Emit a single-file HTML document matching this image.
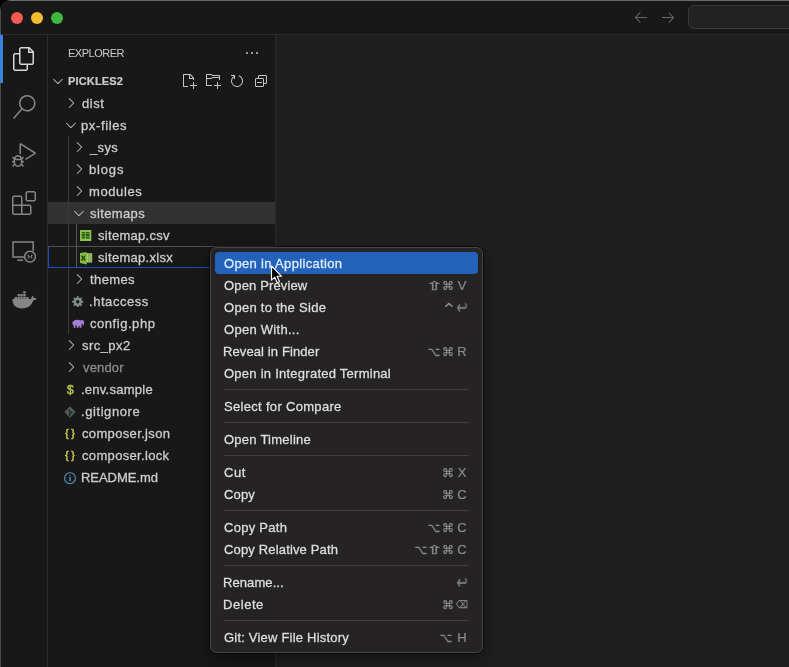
<!DOCTYPE html>
<html lang="en">
<head>
<meta charset="utf-8">
<title>Explorer context menu</title>
<style>
*{box-sizing:border-box;margin:0;padding:0}
html,body{width:789px;height:667px;overflow:hidden;background:#000}
body{font-family:"Liberation Sans","DejaVu Sans",sans-serif;font-size:13px;color:#ccc;position:relative}
#win{position:absolute;left:0;top:0;width:800px;height:680px;background:#181818;border-top-left-radius:10px;overflow:hidden}
#in{position:absolute;left:1px;top:1px;width:800px;height:680px;background:#1f1f1f}
#frame{position:absolute;left:0;top:0;width:900px;height:900px;border-left:1px solid #484848;border-top:1px solid #6a6a6a;border-top-left-radius:10px}
#title{position:absolute;left:0;top:0;width:100%;height:34px;background:#181818;border-bottom:1px solid #2b2b2b;z-index:3}
.tl{position:absolute;top:10.600px;width:12.400px;height:12.400px;border-radius:50%}
#act{position:absolute;left:0;top:33px;width:47px;height:700px;background:#181818;border-right:1px solid #2b2b2b}
.ind{position:absolute;left:0;top:34px;width:2.500px;height:49px;background:#3a82dc}
#act svg{position:absolute}
#side{position:absolute;left:47px;top:33px;width:228px;height:700px;background:#181818;border-right:1px solid #2b2b2b}
.abs{position:absolute}
.lbl,.l,.g,.t{will-change:transform}
.row{position:absolute;left:0;width:227px;height:22px;line-height:22px;white-space:nowrap;color:#ccc}
.row span{position:absolute;top:0}
.row .lbl{top:1px;letter-spacing:.3px;-webkit-text-stroke:.3px currentColor}
.row svg{position:absolute}
.guide{position:absolute;width:1px;background:#3a3a3a}
#menu{position:absolute;left:210px;top:247px;width:273px;height:406px;background:#252324;border-radius:6.5px;box-shadow:0 0 0 1px rgba(0,0,0,.55),inset 0 0 0 1px #474546,0 6px 18px 1px rgba(0,0,0,.4)}
.mi{position:absolute;left:5px;width:263px;height:22px;line-height:22px;border-radius:4px;color:#dedede;white-space:nowrap}
.mi .l{position:absolute;left:9px;top:1px;letter-spacing:.3px;-webkit-text-stroke:.3px currentColor}
.mi .g{position:absolute;top:0;width:20px;text-align:center;color:#8c8c8c;-webkit-text-stroke:.25px currentColor;font-family:"DejaVu Sans","Liberation Sans",sans-serif;font-size:13px;line-height:22px}
.mi .ky{font-family:"Liberation Sans",sans-serif;font-size:13px;top:1px;-webkit-text-stroke:.2px currentColor}
.mi .sh{transform:scaleX(1.850);font-size:12px;top:1px;margin-left:1px}
.mi .cm{font-size:12px;top:1px}
.mi .op{font-size:12.500px;top:1px;transform:scaleX(.88)}
.mi .ct{font-size:18px;top:3px;margin-left:1.500px;-webkit-text-stroke:0;transform:scaleX(1.080)}
.mi .rt{font-size:14.500px;top:0px;transform:scale(.92,1.300);-webkit-text-stroke:0}
.mi .bs{font-size:10.500px;top:0px;transform:scaleX(.8);margin-left:-.5px}
.mi.sel{background:#2362ba;color:#dcecff}
.sep{position:absolute;left:14px;width:245px;height:1px;background:#3f3d3e}
</style>
</head>
<body>
<div id="win"><div id="in">
  <div id="title">
    <div class="tl" style="left:9.800px;background:#f05b53"></div>
    <div class="tl" style="left:29.800px;background:#f4bd30"></div>
    <div class="tl" style="left:49.700px;background:#3eb93f"></div>
    <svg class="abs" style="left:632px;top:8px" width="16" height="16" viewBox="0 0 16 16" fill="#666"><path d="M7 3.093l-5 5V8.8l5 5 .707-.707-4.146-4.147H14v-1H3.56L7.708 3.8 7 3.093z"/></svg>
    <svg class="abs" style="left:659px;top:8px" width="16" height="16" viewBox="0 0 16 16" fill="#666"><path d="M9 13.887l5-5V8.18l-5-5-.707.707 4.146 4.147H2v1h10.44L8.292 13.18l.707.707z"/></svg>
    <div class="abs" style="left:687px;top:4px;width:140px;height:24px;border:1px solid #3a3a3a;border-radius:6px;background:#222"></div>
  </div>
  <div id="act">
    <svg style="left:11px;top:13px" width="24" height="24" viewBox="0 0 24 24" fill="#d7d7d7"><path d="M17.5 0h-9L7 1.500V6H2.500L1 7.500v15.070L2.500 24h12.070L16 22.570V18h4.700l1.300-1.430V4.500L17.500 0zm0 2.120l2.380 2.380H17.500V2.120zm-3 20.380h-12v-15H7v9.070L8.500 18h6v4.500zm6-6h-12v-15H16V6h4.500v10.500z"/></svg>
    <svg style="left:11px;top:61px" width="24" height="24" viewBox="0 0 24 24" fill="#868686"><path d="M15.250 0a8.250 8.250 0 0 0-6.180 13.720L1 22.880l1.120 1 8.050-9.120A8.251 8.251 0 1 0 15.250.010V0zm0 15a6.750 6.750 0 1 1 0-13.500 6.750 6.750 0 0 1 0 13.500z"/></svg>
    <svg style="left:11px;top:109px" width="24" height="24" viewBox="0 0 24 24" fill="#868686"><path d="M10.940 13.500l-1.320 1.320a3.730 3.730 0 0 0-7.240 0L1.060 13.500 0 14.560l1.720 1.720-.22.220V18H0v1.500h1.500v.080c.077.489.214.966.410 1.420L0 22.940 1.060 24l1.650-1.650A4.308 4.308 0 0 0 6 24a4.310 4.310 0 0 0 3.290-1.650L10.940 24 12 22.940 10.090 21c.198-.464.336-.951.410-1.450v-.1H12V18h-1.500v-1.500l-.22-.22L12 14.560l-1.060-1.060zM6 13.500a2.250 2.250 0 0 1 2.250 2.250h-4.500A2.250 2.250 0 0 1 6 13.500zm3 6a3.330 3.330 0 0 1-3 3 3.330 3.330 0 0 1-3-3v-2.250h6v2.250zm14.760-9.900v1.260L13.500 17.370V15.600l8.500-5.370L9 2v9.460a5.070 5.070 0 0 0-1.500-.72V.630L8.640 0l15.120 9.600z"/></svg>
    <svg style="left:11px;top:157px" width="24" height="24" viewBox="0 0 24 24" fill="#868686"><path d="M13.500 1.500L15 0h7.500L24 1.500V9l-1.500 1.500H15L13.500 9V1.500zm1.500 0V9h7.500V1.500H15zM0 15V6l1.500-1.500H9L10.500 6v7.500H18l1.500 1.500v7.500L18 24H1.500L0 22.500V15zm9-1.500V6H1.500v7.500H9zM9 15H1.500v7.500H9V15zm1.500 7.500H18V15h-7.500v7.500z"/></svg>
    <svg style="left:11px;top:205px" width="24" height="24" viewBox="0 0 24 24" fill="none" stroke="#868686" stroke-width="1.500"><path d="M12.500 18H1V3h20.200v9"/><path d="M5.200 21.200h5.800"/><circle cx="18" cy="17.700" r="5.400"/><path d="M15.700 15.900l1.500 1.800-1.500 1.800M20.300 15.900l-1.500 1.800 1.500 1.800" stroke-width="1.100"/></svg>
    <svg style="left:10.500px;top:256.500px" width="25" height="18.500" viewBox="0 0 26 19" fill="#868686"><path d="M0.400 8.200h19.300c.3-1.500 1-2.600 2-3.300.6.700.9 1.500.8 2.500 1.200-.4 2.300-.3 3.100.2-.6 1.200-1.800 1.900-3.500 1.900C20.500 14.800 16.500 18 10.500 18 4 18 0.400 14.500 0.400 8.200z"/><path d="M2.700 5.100h2.500v2.500H2.700zM5.700 5.100h2.500v2.500H5.700zM8.700 5.100h2.500v2.500H8.700zM11.700 5.100h2.500v2.500h-2.500zM14.700 5.100h2.500v2.500h-2.500zM5.700 2.100h2.500v2.500H5.700zM8.700 2.100h2.500v2.500H8.700zM11.700 2.100h2.500v2.500h-2.500zM11.700 -0.900h2.500v2.500h-2.500z" transform="translate(0,1)"/></svg>
  </div>
  <div id="side">
    <span class="abs t" style="left:20px;top:9px;line-height:20px;font-size:11px;color:#ccc;letter-spacing:-.5px">EXPLORER</span>
    <svg class="abs" style="left:196px;top:11px" width="16" height="16" viewBox="0 0 16 16" fill="#c5c5c5"><path d="M4 8a1 1 0 1 1-2 0 1 1 0 0 1 2 0zm5 0a1 1 0 1 1-2 0 1 1 0 0 1 2 0zm5 0a1 1 0 1 1-2 0 1 1 0 0 1 2 0z"/></svg>
    <div class="row" style="top:36px"><svg style="left:2px;top:3px" width="16" height="16" viewBox="0 0 16 16" fill="#c5c5c5"><path d="M7.976 10.072l4.357-4.357.62.618L8.284 11h-.618L3 6.333l.619-.618 4.357 4.357z"/></svg><span class="t" style="left:20px;top:-.5px;font-size:11px;font-weight:bold;letter-spacing:.15px;-webkit-text-stroke:.2px currentColor">PICKLES2</span><svg style="left:133px;top:3px" width="16" height="16" viewBox="0 0 16 16" fill="#c5c5c5"><path d="M9.500 1.100l3.400 3.500.1.400v2h-1V6H8V2H3v11h4v1H2.500l-.5-.5v-12l.5-.5h6.700l.3.100zM9 2v3h2.900L9 2zm4 14h-1v-3H9v-1h3V9h1v3h3v1h-3v3z"/></svg><svg style="left:157px;top:3px" width="16" height="16" viewBox="0 0 16 16" fill="#c5c5c5"><path d="M14.500 2H7.710l-.85-.85L6.510 1h-5l-.5.500v11l.5.500H7v-1H1.990V6h4.490l.35-.15.860-.86H14v1.500l-.001.510h1.011V2.500L14.500 2zm-.51 2h-6.500l-.35.150-.86.860H2v-3h4.290l.85.850.36.150H14l-.1.990zM13 16h-1v-3H9v-1h3V9h1v3h3v1h-3v3z"/></svg><svg style="left:181px;top:3px" width="16" height="16" viewBox="0 0 16 16" fill="#c5c5c5"><path d="M4.681 3H2V2h3.500l.5.500V6H5V4a5 5 0 1 0 4.530-.761l.302-.953A6 6 0 1 1 4.681 3z"/></svg><svg style="left:205px;top:3px" width="16" height="16" viewBox="0 0 16 16" fill="#c5c5c5"><path d="M9 9H4v1h5V9z"/><path d="M5 3l1-1h7l1 1v7l-1 1h-2v2l-1 1H3l-1-1V6l1-1h2V3zm1 2h4l1 1v4h2V3H6v2zm4 1H3v7h7V6z"/></svg></div>
    <div class="row" style="top:58px"><svg style="left:15px;top:3px" width="16" height="16" viewBox="0 0 16 16" fill="#c5c5c5"><path d="M10.072 8.024L5.715 3.667l.618-.62L11 7.716v.618L6.333 13l-.618-.619 4.357-4.357z"/></svg><span class="lbl" style="left:34px;letter-spacing:0.538px">dist</span></div>
    <div class="row" style="top:80px"><svg style="left:15px;top:3px" width="16" height="16" viewBox="0 0 16 16" fill="#c5c5c5"><path d="M7.976 10.072l4.357-4.357.62.618L8.284 11h-.618L3 6.333l.619-.618 4.357 4.357z"/></svg><span class="lbl" style="left:33px;letter-spacing:0.62px">px-files</span></div>
    <div class="row" style="top:102px"><svg style="left:23px;top:3px" width="16" height="16" viewBox="0 0 16 16" fill="#c5c5c5"><path d="M10.072 8.024L5.715 3.667l.618-.62L11 7.716v.618L6.333 13l-.618-.619 4.357-4.357z"/></svg><span class="lbl" style="left:42px;letter-spacing:0.363px">_sys</span></div>
    <div class="row" style="top:124px"><svg style="left:23px;top:3px" width="16" height="16" viewBox="0 0 16 16" fill="#c5c5c5"><path d="M10.072 8.024L5.715 3.667l.618-.62L11 7.716v.618L6.333 13l-.618-.619 4.357-4.357z"/></svg><span class="lbl" style="left:41px;letter-spacing:0.835px">blogs</span></div>
    <div class="row" style="top:146px"><svg style="left:23px;top:3px" width="16" height="16" viewBox="0 0 16 16" fill="#c5c5c5"><path d="M10.072 8.024L5.715 3.667l.618-.62L11 7.716v.618L6.333 13l-.618-.619 4.357-4.357z"/></svg><span class="lbl" style="left:41px;letter-spacing:0.597px">modules</span></div>
    <div class="row" style="top:168px;background:#323232"><svg style="left:23px;top:3px" width="16" height="16" viewBox="0 0 16 16" fill="#c5c5c5"><path d="M7.976 10.072l4.357-4.357.62.618L8.284 11h-.618L3 6.333l.619-.618 4.357 4.357z"/></svg><span class="lbl" style="left:42px;letter-spacing:0.386px">sitemaps</span></div>
    <div class="row" style="top:190px"><svg style="left:32px;top:6px" width="12" height="12" viewBox="0 0 12 12"><rect x="0" y="0" width="11.300" height="11.100" rx=".5" fill="#8cc152"/><path d="M1.700 2h3.600v1.400H1.700zM6 2h3.600v1.400H6zM1.700 4.100h3.600v1.800H1.700zM6 4.100h3.600v1.800H6zM1.700 6.600h3.600v1.800H1.700zM6 6.600h3.600v1.800H6z" fill="#2f5a17"/></svg><span class="lbl" style="left:50px;letter-spacing:0.296px">sitemap.csv</span></div>
    <div class="row" style="top:212px;box-shadow:inset 0 1px 0 #505050,inset 1px 0 0 #1d4fc0,inset 0 -1px 0 #1d4fc0,inset -1px 0 0 #1d4fc0"><svg style="left:32px;top:5px" width="13" height="14" viewBox="0 0 13 14"><rect x="6.200" y="2.200" width="6" height="9.300" rx=".4" fill="#a9d277"/><path d="M8.900 2.600v8.500M10.900 2.600v8.500" stroke="#5f8f30" stroke-width=".8"/><path d="M0 2.100L6.700 1v12.400L0 12.100z" fill="#83bd45"/><path d="M1.500 4.700l3.700 4.800M5.200 4.700L1.500 9.500" stroke="#1f3d0c" stroke-width="1.300"/></svg><span class="lbl" style="left:50px;letter-spacing:0.297px">sitemap.xlsx</span></div>
    <div class="row" style="top:234px"><svg style="left:23px;top:3px" width="16" height="16" viewBox="0 0 16 16" fill="#c5c5c5"><path d="M10.072 8.024L5.715 3.667l.618-.62L11 7.716v.618L6.333 13l-.618-.619 4.357-4.357z"/></svg><span class="lbl" style="left:42px;letter-spacing:0.398px">themes</span></div>
    <div class="row" style="top:256px"><svg style="left:24px;top:5.700px" width="11.500" height="11.500" viewBox="0 0 14 14"><circle cx="7" cy="7" r="3.600" fill="none" stroke="#818c8e" stroke-width="3"/><g stroke="#818c8e" stroke-width="2.400"><path d="M7 0.300v2.200M7 11.500v2.200M0.300 7h2.200M11.500 7h2.200M2.260 2.260l1.560 1.560M10.180 10.180l1.560 1.560M2.260 11.740l1.560-1.560M10.180 3.820l1.560-1.560"/></g></svg><span class="lbl" style="left:41px;letter-spacing:0.551px">.htaccess</span></div>
    <div class="row" style="top:278px"><svg style="left:24px;top:6.800px" width="12.400" height="9.500" viewBox="0 1.500 13 10" fill="#a27fd6"><path d="M0.300 6.500C0.300 3.800 2.500 2.200 5.600 2.200c1.300 0 2.500.3 3.400.9.600-.5 1.400-.7 2.100-.5 1 .3 1.500 1.200 1.600 2.300.1 1.300-.2 2.400-.6 3.400l-.9-.2c.1-.7.1-1.300 0-1.800-.3.400-.7.700-1.200.8V10.800H8V8.800H6.900v2H5V8.600c-.5-.1-1-.3-1.400-.6v2.800H1.700V8C.8 7.700.3 7.200.3 6.500z"/></svg><span class="lbl" style="left:42px;letter-spacing:0.545px">config.php</span></div>
    <div class="row" style="top:300px"><svg style="left:15px;top:3px" width="16" height="16" viewBox="0 0 16 16" fill="#c5c5c5"><path d="M10.072 8.024L5.715 3.667l.618-.62L11 7.716v.618L6.333 13l-.618-.619 4.357-4.357z"/></svg><span class="lbl" style="left:34px;letter-spacing:0.431px">src_px2</span></div>
    <div class="row" style="top:322px"><svg style="left:15px;top:3px" width="16" height="16" viewBox="0 0 16 16" fill="#c5c5c5"><path d="M10.072 8.024L5.715 3.667l.618-.62L11 7.716v.618L6.333 13l-.618-.619 4.357-4.357z"/></svg><span class="lbl" style="left:35px;letter-spacing:0.163px;color:#8c8c8c">vendor</span></div>
    <div class="row" style="top:344px"><span class="t" style="left:18.5px;top:1px;color:#bcc24c;font-size:12px;-webkit-text-stroke:.5px currentColor">$</span><span class="lbl" style="left:33px;letter-spacing:0.254px">.env.sample</span></div>
    <div class="row" style="top:366px"><svg style="left:15px;top:5px" width="14" height="14" viewBox="0 0 14 14"><rect x="2.900" y="2.900" width="8.200" height="8.200" rx=".8" transform="rotate(45 7 7)" fill="#4d5a5e"/><path d="M5.200 4.200l3.300 3.300M6.800 5.800v4" stroke="#181818" stroke-width=".9"/><circle cx="6.800" cy="9.800" r=".9" fill="#181818"/><circle cx="8.700" cy="7.700" r=".9" fill="#181818"/></svg><span class="lbl" style="left:33px;letter-spacing:0.572px">.gitignore</span></div>
    <div class="row" style="top:388px"><span class="t" style="left:16.5px;top:0;color:#c4c44c;font-size:11px;letter-spacing:2.600px;-webkit-text-stroke:.5px currentColor">{}</span><span class="lbl" style="left:34px;letter-spacing:0.346px">composer.json</span></div>
    <div class="row" style="top:410px"><span class="t" style="left:16.5px;top:0;color:#c4c44c;font-size:11px;letter-spacing:2.600px;-webkit-text-stroke:.5px currentColor">{}</span><span class="lbl" style="left:34px;letter-spacing:0.335px">composer.lock</span></div>
    <div class="row" style="top:432px"><svg style="left:15px;top:5px" width="14" height="14" viewBox="0 0 14 14"><circle cx="7" cy="7.200" r="5.400" fill="none" stroke="#5596bd" stroke-width="1.100"/><text x="7" y="10.400" font-family="Liberation Serif,serif" font-size="9" font-weight="bold" fill="#5596bd" text-anchor="middle">i</text></svg><span class="lbl" style="left:33px;letter-spacing:-0.05px">README.md</span></div>
    <div class="guide" style="left:20px;top:102px;height:198px"></div>
    <div class="guide" style="left:28px;top:190px;height:44px;background:#585858"></div>
  </div>
</div><div id="frame"></div><div class="ind"></div>
</div>
<div id="menu">
  <div class="mi sel" style="top:5px"><span class="l" style="left:9px;letter-spacing:0.336px">Open in Application</span></div>
  <div class="mi" style="top:27px"><span class="l" style="left:9px;letter-spacing:0.143px">Open Preview</span><span class="g sh" style="left:209.3px">⇧</span><span class="g cm" style="left:222.5px">⌘</span><span class="g ky" style="left:237px">V</span></div>
  <div class="mi" style="top:49px"><span class="l" style="left:9px;letter-spacing:0.291px">Open to the Side</span><span class="g ct" style="left:222.5px">⌃</span><span class="g rt" style="left:237px">↩</span></div>
  <div class="mi" style="top:71px"><span class="l" style="left:9px;letter-spacing:0.281px">Open With...</span></div>
  <div class="mi" style="top:93px"><span class="l" style="left:8px;letter-spacing:0.107px">Reveal in Finder</span><span class="g op" style="left:209.3px">⌥</span><span class="g cm" style="left:222.5px">⌘</span><span class="g ky" style="left:237px">R</span></div>
  <div class="mi" style="top:115px"><span class="l" style="left:9px;letter-spacing:0.252px">Open in Integrated Terminal</span></div>
  <div class="sep" style="top:142px"></div>
  <div class="mi" style="top:148px"><span class="l" style="left:9px;letter-spacing:0.314px">Select for Compare</span></div>
  <div class="sep" style="top:175px"></div>
  <div class="mi" style="top:181px"><span class="l" style="left:9px;letter-spacing:0.241px">Open Timeline</span></div>
  <div class="sep" style="top:208px"></div>
  <div class="mi" style="top:214px"><span class="l" style="left:9px;letter-spacing:0.508px">Cut</span><span class="g cm" style="left:222.5px">⌘</span><span class="g ky" style="left:237px">X</span></div>
  <div class="mi" style="top:236px"><span class="l" style="left:9px;letter-spacing:0.142px">Copy</span><span class="g cm" style="left:222.5px">⌘</span><span class="g ky" style="left:237px">C</span></div>
  <div class="sep" style="top:263px"></div>
  <div class="mi" style="top:269px"><span class="l" style="left:9px;letter-spacing:0.274px">Copy Path</span><span class="g op" style="left:209.3px">⌥</span><span class="g cm" style="left:222.5px">⌘</span><span class="g ky" style="left:237px">C</span></div>
  <div class="mi" style="top:291px"><span class="l" style="left:9px;letter-spacing:0.16px">Copy Relative Path</span><span class="g op" style="left:195.8px">⌥</span><span class="g sh" style="left:209.3px">⇧</span><span class="g cm" style="left:222.5px">⌘</span><span class="g ky" style="left:237px">C</span></div>
  <div class="sep" style="top:318px"></div>
  <div class="mi" style="top:324px"><span class="l" style="left:8px;letter-spacing:0.083px">Rename...</span><span class="g rt" style="left:237px">↩</span></div>
  <div class="mi" style="top:346px"><span class="l" style="left:8px;letter-spacing:0.55px">Delete</span><span class="g cm" style="left:222.5px">⌘</span><span class="g bs" style="left:237px">⌫</span></div>
  <div class="sep" style="top:373px"></div>
  <div class="mi" style="top:379px"><span class="l" style="left:9px;letter-spacing:0.207px">Git: View File History</span><span class="g op" style="left:221.0px">⌥</span><span class="g ky" style="left:237px">H</span></div>
</div>
<svg class="abs" style="left:269px;top:264px" width="18" height="22" viewBox="0 0 18 22"><path d="M2.500 2v14.200l3.300-3.100 2.400 5.600 2.300-1-2.400-5.400h4.500z" fill="#000" stroke="#fff" stroke-width="1.100" stroke-linejoin="round"/></svg>
</body>
</html>
